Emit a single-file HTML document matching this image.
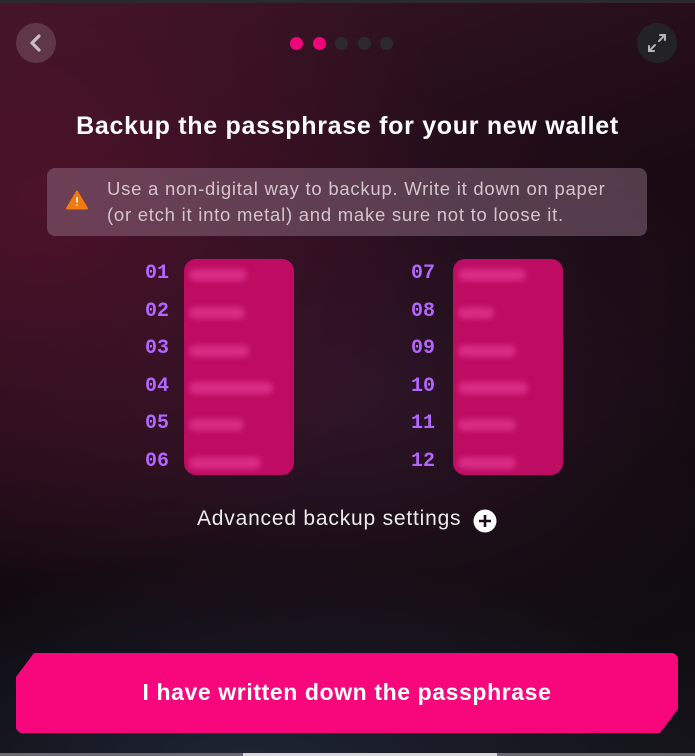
<!DOCTYPE html>
<html><head><meta charset="utf-8"><style>
*{margin:0;padding:0;box-sizing:border-box}
html,body{width:695px;height:756px;overflow:hidden;background:#000}
body{position:relative;font-family:"Liberation Sans",sans-serif;
background:
radial-gradient(ellipse 420px 380px at 40px 200px, rgba(85,18,45,0.8), rgba(85,18,45,0) 100%),
radial-gradient(ellipse 500px 300px at 350px 400px, rgba(48,22,42,0.9), rgba(48,22,42,0) 100%),
radial-gradient(ellipse 500px 200px at 250px 760px, rgba(30,36,52,1), rgba(30,36,52,0) 100%),
linear-gradient(160deg,#3a1626 0%,#1b0a14 40%,#0a0709 70%,#141217 100%);}
.topbar{position:absolute;left:0;top:0;width:695px;height:3px;background:#2a2a2e}
.btn-c{position:absolute;top:23px;width:40px;height:40px;border-radius:50%}
.dots{position:absolute;top:37px;left:290px;display:flex;gap:9.5px}
.dots span{width:13px;height:13px;border-radius:50%;background:#2c2a2d}
.dots span.on{background:#f0067a}
h1{position:absolute;top:112px;left:0;width:695px;text-align:center;color:#fff;font-size:25px;font-weight:bold;letter-spacing:0.7px;white-space:nowrap}
.warn{position:absolute;left:47px;top:168px;width:600px;height:68px;border-radius:8px;background:rgba(150,120,140,0.45)}
.warn p{position:absolute;left:60px;top:8px;color:#d2c6cc;font-size:18.5px;line-height:26px;letter-spacing:0.75px;white-space:nowrap}
.num{position:absolute;font-family:"Liberation Mono",monospace;color:#b266ff;font-size:20px;font-weight:bold}
.panel{position:absolute;top:259px;width:110px;height:216px;border-radius:12px;background:#bd0c62;overflow:hidden}
.panel i{position:absolute;left:5px;height:12px;border-radius:6px;background:#d92c84;filter:blur(3px)}
.adv{position:absolute;top:507px;left:197px;color:#ececec;font-size:21px;letter-spacing:0.8px;white-space:nowrap}
.cta{position:absolute;left:16px;top:653px;width:662px;height:80px;background:#f8077c;
clip-path:polygon(18px 0,658px 0,662px 4px,662px 56px,644px 80px,4px 80px,0 76px,0 24px);border-radius:6px}
.cta span{position:absolute;left:0;width:100%;top:26px;text-align:center;color:#fff;font-weight:bold;font-size:23px;letter-spacing:0.6px;white-space:nowrap}
.bottom{position:absolute;left:0;top:753px;width:695px;height:3px;background:#6a6a6e}
.bottom b{position:absolute;left:243px;width:254px;height:3px;background:#d8d8d8}
</style></head><body>
<div class="topbar"></div>
<div class="btn-c" style="left:16px;background:rgba(255,255,255,0.15)">
<svg width="40" height="40"><path d="M23 13 L16 20 L23 27" stroke="#c8c0c4" stroke-width="3.2" fill="none" stroke-linecap="round" stroke-linejoin="round"/></svg></div>
<div class="btn-c" style="left:637px;background:#232325">
<svg width="40" height="40"><g stroke="#b4b4b4" stroke-width="2" fill="none" stroke-linecap="round"><path d="M22 18 L28 12 M23 12 H28 V17"/><path d="M18 22 L12 28 M12 23 V28 H17"/></g></svg></div>
<div class="dots"><span class="on"></span><span class="on"></span><span></span><span></span><span></span></div>
<h1>Backup the passphrase for your new wallet</h1>
<div class="warn">
<svg style="position:absolute;left:19px;top:22px" width="22" height="20"><path d="M11 1.5 L21 18.5 H1 Z" fill="#f07a10" stroke="#f07a10" stroke-width="2" stroke-linejoin="round"/><path d="M11 7 V12.5" stroke="#fff" stroke-width="1.6"/><circle cx="11" cy="15.3" r="0.9" fill="#fff"/></svg>
<p>Use a non-digital way to backup. Write it down on paper<br>(or etch it into metal) and make sure not to loose it.</p></div>
<div class="num" style="left:145px;top:262px">01</div>
<div class="num" style="left:145px;top:300px">02</div>
<div class="num" style="left:145px;top:337px">03</div>
<div class="num" style="left:145px;top:375px">04</div>
<div class="num" style="left:145px;top:412px">05</div>
<div class="num" style="left:145px;top:450px">06</div>
<div class="num" style="left:411px;top:262px">07</div>
<div class="num" style="left:411px;top:300px">08</div>
<div class="num" style="left:411px;top:337px">09</div>
<div class="num" style="left:411px;top:375px">10</div>
<div class="num" style="left:411px;top:412px">11</div>
<div class="num" style="left:411px;top:450px">12</div>
<div class="panel" style="left:184px"><i style="top:10px;width:58px"></i><i style="top:48px;width:56px"></i><i style="top:86px;width:60px"></i><i style="top:123px;width:84px"></i><i style="top:160px;width:55px"></i><i style="top:198px;width:72px"></i></div>
<div class="panel" style="left:453px"><i style="top:10px;width:68px"></i><i style="top:48px;width:36px"></i><i style="top:86px;width:58px"></i><i style="top:123px;width:70px"></i><i style="top:160px;width:58px"></i><i style="top:198px;width:58px"></i></div>
<div class="adv">Advanced backup settings</div>
<svg style="position:absolute;left:473px;top:509px" width="24" height="24"><circle cx="12" cy="12" r="11.5" fill="#fff"/><path d="M12 6 V18 M6 12 H18" stroke="#1a0c14" stroke-width="2.6"/></svg>
<div class="cta"><span>I have written down the passphrase</span></div>
<div class="bottom"><b></b></div>
</body></html>
